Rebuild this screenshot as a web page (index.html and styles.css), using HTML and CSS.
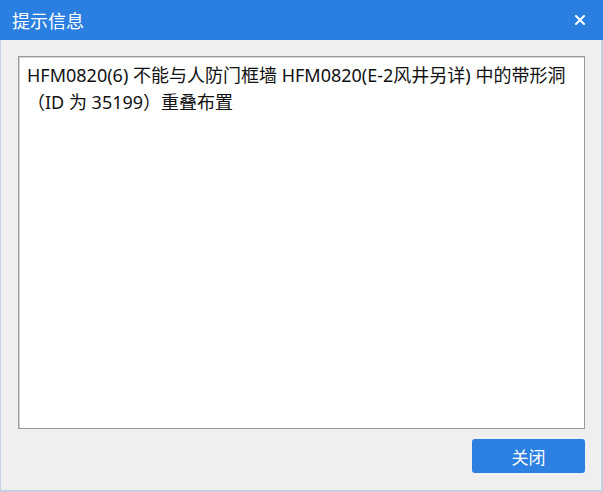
FILE: index.html
```html
<!DOCTYPE html>
<html lang="zh-CN">
<head>
<meta charset="utf-8">
<title>提示信息</title>
<link rel="stylesheet" href="styles.css">
</head>
<body>
<div class="window">
  <div class="titlebar">
    <span class="title">提示信息</span>
    <span class="close" aria-label="关闭">
      <svg width="10" height="10" viewBox="0 0 10 10"><path d="M1 1 L9 9 M9 1 L1 9" stroke="#fff" stroke-width="2" stroke-linecap="square" fill="none"/></svg>
    </span>
  </div>
  <div class="content">
    <div class="message">HFM0820(6) 不能与人防门框墙 HFM0820(E-2风井另详) 中的带形洞（ID 为 35199）重叠布置</div>
    <div class="footer">
      <button class="btn">关闭</button>
    </div>
  </div>
</div>
</body>
</html>
```
FILE: styles.css
```css
html, body {
  margin: 0;
  padding: 0;
  background: #efefef;
}
.window {
  width: 603px;
  height: 492px;
  display: flex;
  flex-direction: column;
  font-family: "Noto Sans", "Noto Sans CJK SC", sans-serif;
}
.titlebar {
  height: 40px;
  flex: none;
  background: #2b7fe0;
  display: flex;
  align-items: center;
  justify-content: space-between;
  padding: 0 18px 0 12px;
}
.title {
  color: #ffffff;
  font-size: 18px;
  font-family: "Noto Sans CJK SC", sans-serif;
  line-height: 1;
  margin-top: -1px;
}
.close {
  display: flex;
  width: 10px;
  height: 10px;
}
.content {
  flex: 1;
  display: flex;
  flex-direction: column;
  background: #efefef;
  border-left: 1px solid #c6d1df;
  border-right: 2px solid #c6d1df;
  border-bottom: 2px solid #c6d1df;
  padding: 16px 16px 17px 17px;
}
.message {
  flex: 1;
  background: #ffffff;
  border: 1px solid #9a9a9a;
  box-shadow: inset 1px 1px 0 #d4d4d4;
  padding: 5px 6px 5px 8px;
  font-size: 18px;
  line-height: 27px;
  color: #111111;
}
.footer {
  display: flex;
  justify-content: flex-end;
  margin-top: 10px;
}
.btn {
  width: 113px;
  height: 34px;
  border: none;
  border-radius: 3px;
  background: #2b80e2;
  color: #ffffff;
  font-family: "Noto Sans CJK SC", sans-serif;
  font-size: 17px;
  padding: 0;
}
```
